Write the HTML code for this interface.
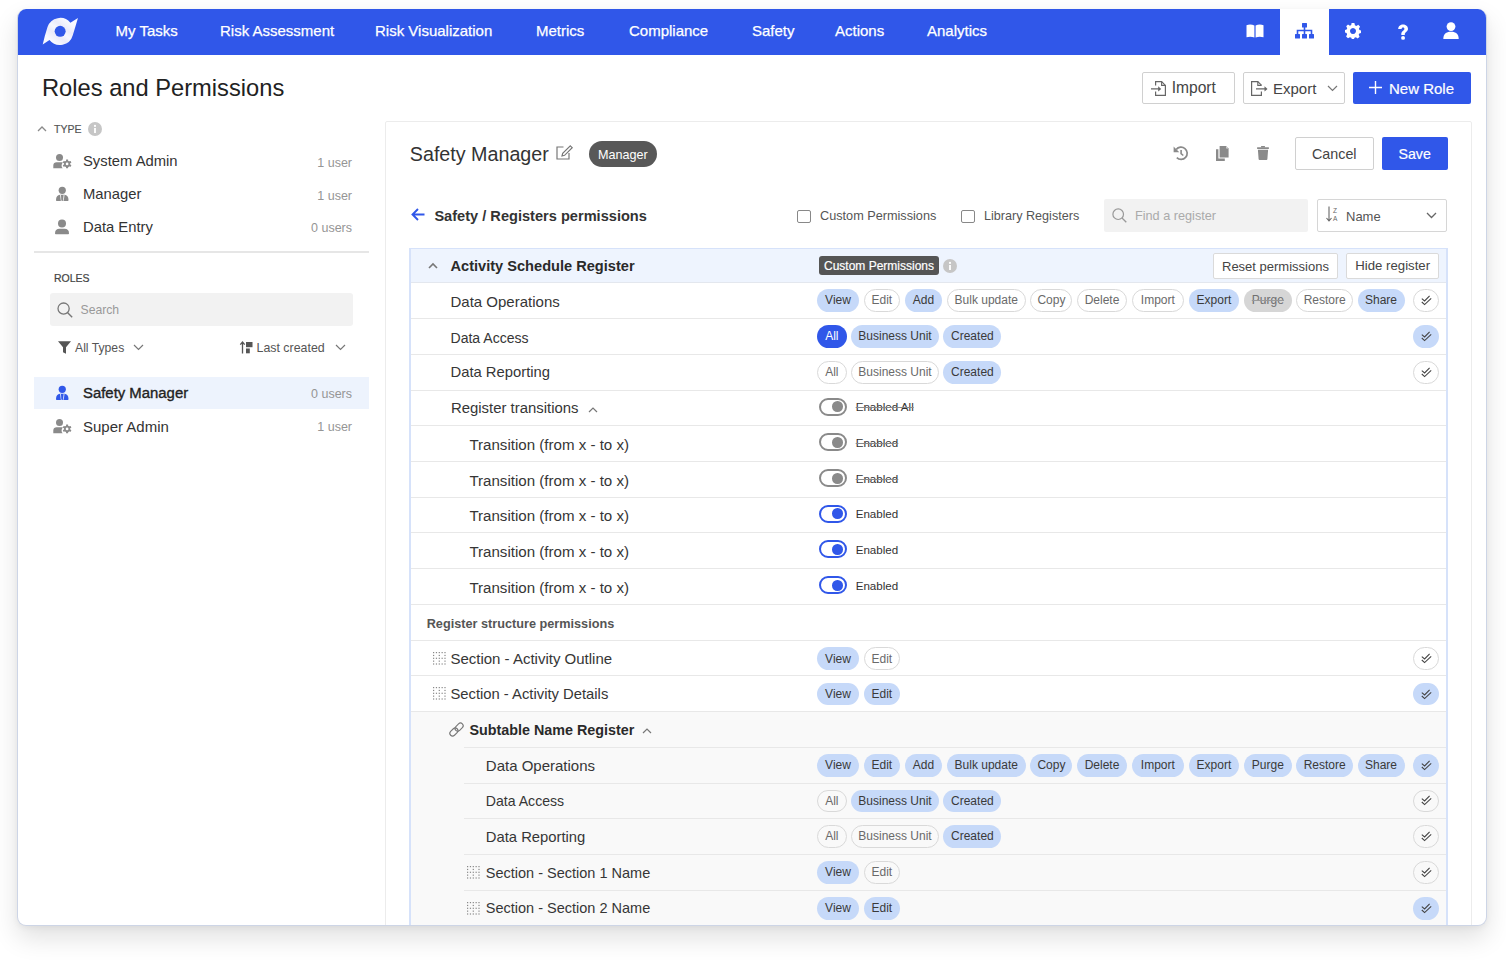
<!DOCTYPE html>
<html><head><meta charset="utf-8">
<style>
*{box-sizing:border-box;margin:0;padding:0}
html,body{width:1506px;height:960px;overflow:hidden;background:#fff;font-family:"Liberation Sans",sans-serif;color:#333}
.abs{position:absolute}
svg.abs{overflow:visible}
#frame{position:absolute;left:17px;top:9px;width:1470px;height:917px;border:1px solid #cdd5e6;border-top:0;border-radius:9px;background:#fff;box-shadow:0 12px 26px rgba(0,0,0,0.12),0 2px 6px rgba(0,0,0,0.05);overflow:hidden}
.txt{position:absolute;white-space:nowrap}
.pill{position:absolute;font-size:12px;line-height:20px;display:flex;align-items:center;justify-content:center;white-space:nowrap}
</style></head><body>
<div id="frame">
<div class="abs" style="left:0.00px;top:0.00px;width:1468.00px;height:46.00px;background:#3057e9"></div>
<svg class="abs" style="left:22.00px;top:6.00px;" width="40" height="32" viewBox="0 0 40 32"><defs><linearGradient id="lg" x1="0.8" y1="0.2" x2="0.2" y2="0.8"><stop offset="0" stop-color="#f8f9ff"/><stop offset="0.3" stop-color="#ebebfa"/><stop offset="0.5" stop-color="#f6f7fe"/><stop offset="0.7" stop-color="#ebebfa"/><stop offset="1" stop-color="#f8f9ff"/></linearGradient></defs><path d="M2.7,29.5 L9.5,24.9 A13.36,13.36 0 0 0 32.8,20.2 Q35.3,12 37.96,2.94 L30.4,7.7 A13.36,13.36 0 0 0 7.5,12 Q4.6,21 2.7,29.5 Z" fill="url(#lg)"/><circle cx="20.15" cy="16.3" r="5.5" fill="#3057e9"/></svg>
<div class="txt" style="top:11.10px;font-size:15px;line-height:21px;color:#ffffff;-webkit-text-stroke:0.25px #ffffff;left:97.50px;">My Tasks</div>
<div class="txt" style="top:11.10px;font-size:15px;line-height:21px;color:#ffffff;-webkit-text-stroke:0.25px #ffffff;left:202.00px;">Risk Assessment</div>
<div class="txt" style="top:11.10px;font-size:15px;line-height:21px;color:#ffffff;-webkit-text-stroke:0.25px #ffffff;left:357.00px;">Risk Visualization</div>
<div class="txt" style="top:11.10px;font-size:15px;line-height:21px;color:#ffffff;-webkit-text-stroke:0.25px #ffffff;left:518.00px;">Metrics</div>
<div class="txt" style="top:11.10px;font-size:15px;line-height:21px;color:#ffffff;-webkit-text-stroke:0.25px #ffffff;left:611.00px;">Compliance</div>
<div class="txt" style="top:11.10px;font-size:15px;line-height:21px;color:#ffffff;-webkit-text-stroke:0.25px #ffffff;left:734.00px;">Safety</div>
<div class="txt" style="top:11.10px;font-size:15px;line-height:21px;color:#ffffff;-webkit-text-stroke:0.25px #ffffff;left:817.00px;">Actions</div>
<div class="txt" style="top:11.10px;font-size:15px;line-height:21px;color:#ffffff;-webkit-text-stroke:0.25px #ffffff;left:909.00px;">Analytics</div>
<div class="abs" style="left:1262.00px;top:0.00px;width:49.00px;height:46.00px;background:#fff"></div>
<svg class="abs" style="left:1228.00px;top:15.00px;" width="18" height="14" viewBox="0 0 18 14"><path d="M0.5,1.2 C3,0.3 6,0.3 8.4,1.6 V13.6 C6,12.4 3,12.4 0.5,13.2 Z M9.6,1.6 C12,0.3 15,0.3 17.5,1.2 V13.2 C15,12.4 12,12.4 9.6,13.6 Z" fill="#fff"/></svg>
<svg class="abs" style="left:1277.00px;top:14.00px;" width="19" height="16" viewBox="0 0 19 16"><rect x="7" y="0" width="5" height="4.5" rx="0.6" fill="#3057e9"/><rect x="0" y="11" width="5" height="4.5" rx="0.6" fill="#3057e9"/><rect x="7" y="11" width="5" height="4.5" rx="0.6" fill="#3057e9"/><rect x="14" y="11" width="5" height="4.5" rx="0.6" fill="#3057e9"/><path d="M9.5,4 V11 M2.5,11 V7.5 H16.5 V11" fill="none" stroke="#3057e9" stroke-width="1.6"/></svg>
<svg class="abs" style="left:1327.00px;top:14.00px;" width="16" height="16" viewBox="0 0 16 16"><path fill="#fff" fill-rule="evenodd" d="M6.6,0 H9.4 L9.9,2.2 L11.3,2.9 L13.3,1.8 L15.1,3.7 L13.9,5.6 L14.4,7 L16,7.5 V9.9 L14.3,10.4 L13.7,11.8 L14.6,13.7 L12.7,15.4 L10.9,14.3 L9.5,14.8 L9,16 H6.8 L6.3,14.8 L4.9,14.2 L3,15.2 L1.1,13.4 L2.1,11.5 L1.6,10.1 L0,9.6 V7.1 L1.6,6.6 L2.2,5.2 L1.2,3.3 L3,1.6 L4.9,2.7 L6.2,2.1 Z M8,5 A3,3 0 1 0 8.001,5 Z"/></svg>
<svg class="abs" style="left:1379.00px;top:14.50px;" width="12" height="16" viewBox="0 0 12 16"><path d="M1.2,5 C1.2,2.1 3.5,0.4 6,0.4 C8.7,0.4 11,2.2 11,4.8 C11,7.8 7.8,8.1 7.8,10.3 V11 H4.3 V10.1 C4.3,6.8 7.4,6.5 7.4,4.9 C7.4,4 6.8,3.5 6,3.5 C5.1,3.5 4.6,4.1 4.6,5 Z" fill="#fff"/><circle cx="6.05" cy="13.9" r="1.95" fill="#fff"/></svg>
<svg class="abs" style="left:1425.00px;top:13.00px;" width="16" height="17" viewBox="0 0 16 17"><circle cx="8" cy="4.6" r="4.4" fill="#fff"/><path d="M0.3,17 C0.3,12 3,9.8 8,9.8 C13,9.8 15.7,12 15.7,17 Z" fill="#fff"/></svg>
<div class="txt" style="top:63.49px;font-size:23.7px;line-height:33px;color:#222;left:24.00px;">Roles and Permissions</div>
<div class="abs" style="left:1124.00px;top:63.00px;width:93.00px;height:32.00px;border:1px solid #d0d0d0;border-radius:2px;background:#fff"></div>
<svg class="abs" style="left:1133.00px;top:72.00px;" width="16" height="15" viewBox="0 0 16 15"><path d="M4.6,4.4 V0.6 H10.6 L14.4,4.4 V14.4 H4.6 V10.6" fill="none" stroke="#666" stroke-width="1.2"/><path d="M10.6,0.6 V4.4 H14.4" fill="none" stroke="#666" stroke-width="1.1"/><path d="M0,7.9 H8" stroke="#666" stroke-width="1.3"/><path d="M7.2,5.3 L10.2,7.9 L7.2,10.5 Z" fill="#666"/></svg>
<div class="txt" style="top:68.39px;font-size:15.6px;line-height:22px;color:#444;left:1153.70px;">Import</div>
<div class="abs" style="left:1225.00px;top:63.00px;width:102.00px;height:32.00px;border:1px solid #d0d0d0;border-radius:2px;background:#fff"></div>
<svg class="abs" style="left:1233.00px;top:72.00px;" width="18" height="15" viewBox="0 0 18 15"><path d="M10.4,4.4 V4.2 L6.8,0.6 H0.6 V14.4 H10.4 V10.6" fill="none" stroke="#666" stroke-width="1.2"/><path d="M6.8,0.6 V4.4 H10.4" fill="none" stroke="#666" stroke-width="1.1"/><path d="M5,7.9 H14" stroke="#666" stroke-width="1.3"/><path d="M13.5,5.3 L16.5,7.9 L13.5,10.5 Z" fill="#666"/></svg>
<div class="txt" style="top:69.10px;font-size:15px;line-height:21px;color:#444;left:1255.00px;">Export</div>
<svg class="abs" style="left:1309.00px;top:76.00px;" width="11" height="7" viewBox="0 0 11 7"><path d="M1,1 L5.5,5.5 L10,1" fill="none" stroke="#777" stroke-width="1.2"/></svg>
<div class="abs" style="left:1335.00px;top:63.00px;width:118.00px;height:32.00px;background:#3057e9;border-radius:2px"></div>
<svg class="abs" style="left:1351.00px;top:72.00px;" width="13" height="13" viewBox="0 0 13 13"><path d="M6.5,0 V13 M0,6.5 H13" stroke="#fff" stroke-width="1.4"/></svg>
<div class="txt" style="top:69.30px;font-size:15px;line-height:21px;color:#fff;-webkit-text-stroke:0.2px #fff;left:1371.00px;">New Role</div>
<svg class="abs" style="left:19.00px;top:116.00px;" width="10" height="7" viewBox="0 0 10 7"><path d="M1,6 L5,2 L9,6" fill="none" stroke="#8a8a8a" stroke-width="1.3"/></svg>
<div class="txt" style="top:112.66px;font-size:10.5px;line-height:15px;color:#555;-webkit-text-stroke:0.2px #555;left:36.00px;">TYPE</div>
<svg class="abs" style="left:70.00px;top:112.50px;" width="14" height="14" viewBox="0 0 14 14"><circle cx="7" cy="7" r="7" fill="#c6c6c6"/><rect x="6.1" y="6" width="1.8" height="5" fill="#fff"/><circle cx="7" cy="3.9" r="1.1" fill="#fff"/></svg>
<svg class="abs" style="left:35.00px;top:145.00px;" width="19" height="16" viewBox="0 0 19 16"><circle cx="6.5" cy="3.6" r="3.5" fill="#8a8a8a"/><path d="M0.3,14.2 V11.4 C0.3,9.5 1.8,8.3 3.6,8.3 H9.4 L9.9,8.6 C9,9.6 8.6,10.8 8.6,11.9 C8.6,12.9 9,13.6 9.7,14.2 Z" fill="#8a8a8a"/><circle cx="14.1" cy="9.9" r="3.1" fill="#8a8a8a"/><rect x="13.05" y="5.5" width="2.1" height="2.2" rx="0.3" transform="rotate(0 14.1 9.9)" fill="#8a8a8a"/><rect x="13.05" y="5.5" width="2.1" height="2.2" rx="0.3" transform="rotate(60 14.1 9.9)" fill="#8a8a8a"/><rect x="13.05" y="5.5" width="2.1" height="2.2" rx="0.3" transform="rotate(120 14.1 9.9)" fill="#8a8a8a"/><rect x="13.05" y="5.5" width="2.1" height="2.2" rx="0.3" transform="rotate(180 14.1 9.9)" fill="#8a8a8a"/><rect x="13.05" y="5.5" width="2.1" height="2.2" rx="0.3" transform="rotate(240 14.1 9.9)" fill="#8a8a8a"/><rect x="13.05" y="5.5" width="2.1" height="2.2" rx="0.3" transform="rotate(300 14.1 9.9)" fill="#8a8a8a"/><circle cx="14.1" cy="9.9" r="1.35" fill="#fff"/></svg>
<div class="txt" style="top:142.37px;font-size:14.8px;line-height:21px;color:#333;left:65.00px;">System Admin</div>
<div class="txt" style="top:144.67px;font-size:12.5px;line-height:18px;color:#959595;right:1134.00px;">1 user</div>
<svg class="abs" style="left:37.90px;top:177.00px;" width="14" height="16" viewBox="0 0 14 16"><circle cx="6.25" cy="4.3" r="3.6" fill="#8a8a8a"/><path d="M0,13.9 C0,10.6 1.5,8.9 4,8.7 H8.5 C11,8.9 12.5,10.6 12.5,13.9 C12.5,14.6 12.1,14.9 11.5,14.9 H1 C0.4,14.9 0,14.6 0,13.9 Z" fill="#8a8a8a"/><path d="M4.4,8.9 L5.3,14.9 M8.1,8.9 L7.2,14.9" stroke="#fff" stroke-width="0.8"/><path d="M5.7,8.9 H6.8 L7,13.5 L6.25,14.5 L5.5,13.5 Z" fill="#8a8a8a"/></svg>
<div class="txt" style="top:175.27px;font-size:14.8px;line-height:21px;color:#333;left:65.00px;">Manager</div>
<div class="txt" style="top:177.57px;font-size:12.5px;line-height:18px;color:#959595;right:1134.00px;">1 user</div>
<svg class="abs" style="left:37.10px;top:209.80px;" width="14" height="16" viewBox="0 0 14 16"><circle cx="7" cy="4.6" r="4" fill="#8a8a8a"/><path d="M0,14.2 C0,11.5 1.5,9.8 4.5,9.8 H9.5 C12.5,9.8 14,11.5 14,14.2 C14,14.9 13.5,15.2 12.8,15.2 H1.2 C0.5,15.2 0,14.9 0,14.2 Z" fill="#8a8a8a"/></svg>
<div class="txt" style="top:207.77px;font-size:14.8px;line-height:21px;color:#333;left:65.00px;">Data Entry</div>
<div class="txt" style="top:210.07px;font-size:12.5px;line-height:18px;color:#959595;right:1134.00px;">0 users</div>
<div class="abs" style="left:16.00px;top:242.00px;width:335.00px;height:2.00px;background:#e6e6e6"></div>
<div class="txt" style="top:261.56px;font-size:10.5px;line-height:15px;color:#444;-webkit-text-stroke:0.2px #444;left:36.00px;">ROLES</div>
<div class="abs" style="left:32.00px;top:284.00px;width:303.00px;height:33.00px;background:#f2f2f2;border-radius:3px"></div>
<svg class="abs" style="left:39.00px;top:293.00px;" width="16" height="16" viewBox="0 0 16 16"><circle cx="6.6" cy="6.6" r="5.6" fill="none" stroke="#777" stroke-width="1.3"/><path d="M10.7,10.7 L15.2,15.2" stroke="#777" stroke-width="1.4"/></svg>
<div class="txt" style="top:292.67px;font-size:12.2px;line-height:17px;color:#999;left:62.50px;">Search</div>
<svg class="abs" style="left:40.00px;top:332.00px;" width="13" height="13" viewBox="0 0 13 13"><path d="M0,0.3 H13 L8,6.3 V12.8 L5,11.3 V6.3 Z" fill="#555"/></svg>
<div class="txt" style="top:330.67px;font-size:12.2px;line-height:17px;color:#555;left:57.00px;">All Types</div>
<svg class="abs" style="left:115.00px;top:335.00px;" width="11" height="7" viewBox="0 0 11 7"><path d="M1,1 L5.5,5.5 L10,1" fill="none" stroke="#777" stroke-width="1.2"/></svg>
<svg class="abs" style="left:222.00px;top:332.00px;" width="13" height="13" viewBox="0 0 13 13"><path d="M2.5,12.5 V1.5 M0.3,3.7 L2.5,1 L4.7,3.7" fill="none" stroke="#555" stroke-width="1.3"/><rect x="6" y="1" width="6.5" height="5.2" fill="#555"/><rect x="6" y="7.5" width="3.8" height="4.8" fill="#555"/></svg>
<div class="txt" style="top:330.60px;font-size:12.4px;line-height:17px;color:#555;left:238.50px;">Last created</div>
<svg class="abs" style="left:317.00px;top:335.00px;" width="11" height="7" viewBox="0 0 11 7"><path d="M1,1 L5.5,5.5 L10,1" fill="none" stroke="#777" stroke-width="1.2"/></svg>
<div class="abs" style="left:16.00px;top:368.00px;width:335.00px;height:32.00px;background:#edf3fd"></div>
<svg class="abs" style="left:37.90px;top:375.80px;" width="14" height="16" viewBox="0 0 14 16"><circle cx="6.25" cy="4.3" r="3.6" fill="#3057e9"/><path d="M0,13.9 C0,10.6 1.5,8.9 4,8.7 H8.5 C11,8.9 12.5,10.6 12.5,13.9 C12.5,14.6 12.1,14.9 11.5,14.9 H1 C0.4,14.9 0,14.6 0,13.9 Z" fill="#3057e9"/><path d="M4.4,8.9 L5.3,14.9 M8.1,8.9 L7.2,14.9" stroke="#edf3fd" stroke-width="0.8"/><path d="M5.7,8.9 H6.8 L7,13.5 L6.25,14.5 L5.5,13.5 Z" fill="#3057e9"/></svg>
<div class="txt" style="top:373.94px;font-size:14.9px;line-height:21px;color:#222;-webkit-text-stroke:0.35px #222;left:65.00px;">Safety Manager</div>
<div class="txt" style="top:376.27px;font-size:12.5px;line-height:18px;color:#959595;right:1134.00px;">0 users</div>
<svg class="abs" style="left:35.00px;top:409.60px;" width="19" height="16" viewBox="0 0 19 16"><circle cx="6.5" cy="3.6" r="3.5" fill="#8a8a8a"/><path d="M0.3,14.2 V11.4 C0.3,9.5 1.8,8.3 3.6,8.3 H9.4 L9.9,8.6 C9,9.6 8.6,10.8 8.6,11.9 C8.6,12.9 9,13.6 9.7,14.2 Z" fill="#8a8a8a"/><circle cx="14.1" cy="9.9" r="3.1" fill="#8a8a8a"/><rect x="13.05" y="5.5" width="2.1" height="2.2" rx="0.3" transform="rotate(0 14.1 9.9)" fill="#8a8a8a"/><rect x="13.05" y="5.5" width="2.1" height="2.2" rx="0.3" transform="rotate(60 14.1 9.9)" fill="#8a8a8a"/><rect x="13.05" y="5.5" width="2.1" height="2.2" rx="0.3" transform="rotate(120 14.1 9.9)" fill="#8a8a8a"/><rect x="13.05" y="5.5" width="2.1" height="2.2" rx="0.3" transform="rotate(180 14.1 9.9)" fill="#8a8a8a"/><rect x="13.05" y="5.5" width="2.1" height="2.2" rx="0.3" transform="rotate(240 14.1 9.9)" fill="#8a8a8a"/><rect x="13.05" y="5.5" width="2.1" height="2.2" rx="0.3" transform="rotate(300 14.1 9.9)" fill="#8a8a8a"/><circle cx="14.1" cy="9.9" r="1.35" fill="#fff"/></svg>
<div class="txt" style="top:406.50px;font-size:15px;line-height:21px;color:#333;left:65.00px;">Super Admin</div>
<div class="txt" style="top:408.87px;font-size:12.5px;line-height:18px;color:#959595;right:1134.00px;">1 user</div>
<div class="abs" style="left:367px;top:112px;width:1087px;height:830px;border:1px solid #ececec;border-radius:2px"></div>
<div class="txt" style="top:131.17px;font-size:19.7px;line-height:28px;color:#333;left:391.80px;">Safety Manager</div>
<svg class="abs" style="left:538.00px;top:136.00px;" width="17" height="15" viewBox="0 0 17 15"><path d="M7.5,2 H1 V14 H13 V8" fill="none" stroke="#777" stroke-width="1.2"/><path d="M14.3,0.8 L16.2,2.7 L8.6,10.3 L6,11 L6.7,8.4 Z" fill="none" stroke="#777" stroke-width="1.2"/></svg>
<div class="abs" style="left:571.00px;top:132.00px;width:68.00px;height:26.00px;background:#585858;border-radius:13px"></div>
<div class="txt" style="top:137.23px;font-size:12.6px;line-height:18px;color:#fff;left:580.00px;">Manager</div>
<svg class="abs" style="left:1155.00px;top:136.00px;" width="16" height="16" viewBox="0 0 16 16"><path d="M3.8,12.6 A6.1,6.1 0 1 0 3.2,4.6" fill="none" stroke="#8a8a8a" stroke-width="1.7"/><path d="M0.6,1.6 V7.3 H6.3 Z" fill="#8a8a8a"/><path d="M8.1,4.9 V8.7 L10.3,10.5" fill="none" stroke="#8a8a8a" stroke-width="1.6"/></svg>
<svg class="abs" style="left:1198.00px;top:137.00px;" width="13" height="15" viewBox="0 0 13 15"><path d="M1.2,3.2 V13.8 H8.8" fill="none" stroke="#8a8a8a" stroke-width="2.4"/><path d="M3.6,0 H10.2 L12.6,2.4 V11.6 H3.6 Z" fill="#8a8a8a"/><path d="M10.2,0 V2.4 H12.6 Z" fill="#ddd"/></svg>
<svg class="abs" style="left:1239.00px;top:137.00px;" width="12" height="14" viewBox="0 0 12 14"><rect x="0" y="1.2" width="12" height="1.7" rx="0.6" fill="#8a8a8a"/><rect x="4" y="0" width="4" height="1.6" rx="0.5" fill="#8a8a8a"/><path d="M0.9,3.8 H11.1 L10.4,13 A1,1 0 0 1 9.4,14 H2.6 A1,1 0 0 1 1.6,13 Z" fill="#8a8a8a"/></svg>
<div class="abs" style="left:1277.00px;top:128.00px;width:79.00px;height:33.00px;border:1px solid #d0d0d0;border-radius:2px;background:#fff"></div>
<div class="txt" style="top:135.35px;font-size:14.3px;line-height:20px;color:#444;left:1294.00px;">Cancel</div>
<div class="abs" style="left:1364.00px;top:128.00px;width:65.50px;height:33.00px;background:#3057e9;border-radius:2px"></div>
<div class="txt" style="top:135.38px;font-size:14.2px;line-height:20px;color:#fff;-webkit-text-stroke:0.2px #fff;left:1380.50px;">Save</div>
<svg class="abs" style="left:393.00px;top:199.00px;" width="14" height="13" viewBox="0 0 14 13"><path d="M13.5,6.5 H2 M7,1 L1.5,6.5 L7,12" fill="none" stroke="#3057e9" stroke-width="1.9"/></svg>
<div class="txt" style="top:196.64px;font-size:14.6px;line-height:20px;color:#333;font-weight:bold;left:416.40px;">Safety / Registers permissions</div>
<div class="abs" style="left:779.00px;top:200.70px;width:14.00px;height:13.80px;border:1.3px solid #888;border-radius:2px"></div>
<div class="txt" style="top:198.30px;font-size:12.7px;line-height:18px;color:#555;left:802.00px;">Custom Permissions</div>
<div class="abs" style="left:943.00px;top:200.70px;width:14.40px;height:13.80px;border:1.3px solid #888;border-radius:2px"></div>
<div class="txt" style="top:198.33px;font-size:12.6px;line-height:18px;color:#555;left:966.00px;">Library Registers</div>
<div class="abs" style="left:1086.00px;top:190.00px;width:204.00px;height:33.00px;background:#f2f2f2;border-radius:2px"></div>
<svg class="abs" style="left:1094.00px;top:199.00px;" width="15" height="15" viewBox="0 0 15 15"><circle cx="6.2" cy="6.2" r="5.3" fill="none" stroke="#999" stroke-width="1.2"/><path d="M10,10 L14.3,14.3" stroke="#999" stroke-width="1.3"/></svg>
<div class="txt" style="top:197.60px;font-size:12.7px;line-height:18px;color:#aaa;left:1117.00px;">Find a register</div>
<div class="abs" style="left:1299.00px;top:190.00px;width:130.00px;height:33.00px;border:1px solid #d6d6d6;border-radius:2px;background:#fff"></div>
<svg class="abs" style="left:1308.00px;top:197.00px;" width="13" height="16" viewBox="0 0 13 16"><path d="M3,0.5 V14.5 M0.5,12 L3,15 L5.5,12" fill="none" stroke="#666" stroke-width="1.1"/><text x="7" y="6.5" font-size="6.5" font-family="Liberation Sans" fill="#666">Z</text><text x="7" y="15" font-size="6.5" font-family="Liberation Sans" fill="#666">A</text></svg>
<div class="txt" style="top:199.00px;font-size:13px;line-height:18px;color:#555;left:1328.00px;">Name</div>
<svg class="abs" style="left:1408.00px;top:203.00px;" width="11" height="7" viewBox="0 0 11 7"><path d="M1,1 L5.5,5.5 L10,1" fill="none" stroke="#666" stroke-width="1.3"/></svg>
<div class="abs" style="left:392.00px;top:239.00px;width:1037.00px;height:35.00px;background:#eef4fe;border-top:1px solid #d6e2fa;border-bottom:1px solid #e3e7ee"></div>
<div class="abs" style="left:392.00px;top:703.00px;width:1037.00px;height:248.00px;background:#f9f9f9"></div>
<div class="abs" style="left:392.00px;top:309.00px;width:1037.00px;height:1.00px;background:#e8e8e8"></div>
<div class="abs" style="left:392.00px;top:345.00px;width:1037.00px;height:1.00px;background:#e8e8e8"></div>
<div class="abs" style="left:392.00px;top:381.00px;width:1037.00px;height:1.00px;background:#e8e8e8"></div>
<div class="abs" style="left:392.00px;top:416.00px;width:1037.00px;height:1.00px;background:#e8e8e8"></div>
<div class="abs" style="left:392.00px;top:452.00px;width:1037.00px;height:1.00px;background:#e8e8e8"></div>
<div class="abs" style="left:392.00px;top:488.00px;width:1037.00px;height:1.00px;background:#e8e8e8"></div>
<div class="abs" style="left:392.00px;top:523.00px;width:1037.00px;height:1.00px;background:#e8e8e8"></div>
<div class="abs" style="left:392.00px;top:559.00px;width:1037.00px;height:1.00px;background:#e8e8e8"></div>
<div class="abs" style="left:392.00px;top:595.00px;width:1037.00px;height:1.00px;background:#e8e8e8"></div>
<div class="abs" style="left:392.00px;top:631.00px;width:1037.00px;height:1.00px;background:#e8e8e8"></div>
<div class="abs" style="left:392.00px;top:666.00px;width:1037.00px;height:1.00px;background:#e8e8e8"></div>
<div class="abs" style="left:392.00px;top:702.00px;width:1037.00px;height:1.00px;background:#e8e8e8"></div>
<div class="abs" style="left:446.00px;top:738.00px;width:983.00px;height:1.00px;background:#e8e8e8"></div>
<div class="abs" style="left:446.00px;top:774.00px;width:983.00px;height:1.00px;background:#e8e8e8"></div>
<div class="abs" style="left:446.00px;top:809.00px;width:983.00px;height:1.00px;background:#e8e8e8"></div>
<div class="abs" style="left:446.00px;top:845.00px;width:983.00px;height:1.00px;background:#e8e8e8"></div>
<div class="abs" style="left:446.00px;top:881.00px;width:983.00px;height:1.00px;background:#e8e8e8"></div>
<div class="abs" style="left:391.00px;top:239.00px;width:2.00px;height:712.00px;background:#d6e2fa"></div>
<div class="abs" style="left:1428.00px;top:239.00px;width:2.00px;height:712.00px;background:#d6e2fa"></div>
<svg class="abs" style="left:410.00px;top:253.00px;" width="10" height="7" viewBox="0 0 10 7"><path d="M1,6 L5,2 L9,6" fill="none" stroke="#777" stroke-width="1.6"/></svg>
<div class="txt" style="top:246.84px;font-size:14.6px;line-height:20px;color:#2a2a2a;font-weight:bold;left:432.50px;">Activity Schedule Register</div>
<div class="abs" style="left:801.00px;top:247.40px;width:119.50px;height:18.20px;background:#555;border-radius:3px"></div>
<div class="txt" style="top:248.64px;font-size:12px;line-height:17px;color:#fff;-webkit-text-stroke:0.2px #fff;left:806.00px;">Custom Permissions</div>
<svg class="abs" style="left:925.00px;top:249.80px;" width="14" height="14" viewBox="0 0 14 14"><circle cx="7" cy="7" r="7" fill="#c6c6c6"/><rect x="6.1" y="6" width="1.8" height="5" fill="#fff"/><circle cx="7" cy="3.9" r="1.1" fill="#fff"/></svg>
<div class="abs" style="left:1195.00px;top:244.00px;width:125.00px;height:26.00px;border:1px solid #dadada;border-radius:2px;background:#fff"></div>
<div class="txt" style="top:248.50px;font-size:13px;line-height:18px;color:#444;left:1204.00px;">Reset permissions</div>
<div class="abs" style="left:1328.00px;top:244.00px;width:93.00px;height:26.00px;border:1px solid #dadada;border-radius:2px;background:#fff"></div>
<div class="txt" style="top:248.43px;font-size:13.2px;line-height:18px;color:#444;left:1337.30px;">Hide register</div>
<div class="txt" style="top:282.40px;font-size:15px;line-height:21px;color:#363636;left:432.50px;">Data Operations</div>
<div class="pill" style="left:799.00px;top:280.05px;width:42px;height:22.5px;background:#c6d9f9;border-radius:12px;color:#3a3a3a">View</div>
<div class="pill" style="left:845.60px;top:280.05px;width:36.5px;height:22.5px;border:1px solid #d9d9d9;border-radius:12px;color:#6a6a6a">Edit</div>
<div class="pill" style="left:886.70px;top:280.05px;width:37.5px;height:22.5px;background:#c6d9f9;border-radius:12px;color:#3a3a3a">Add</div>
<div class="pill" style="left:928.80px;top:280.05px;width:79px;height:22.5px;border:1px solid #d9d9d9;border-radius:12px;color:#6a6a6a">Bulk update</div>
<div class="pill" style="left:1012.40px;top:280.05px;width:42px;height:22.5px;border:1px solid #d9d9d9;border-radius:12px;color:#6a6a6a">Copy</div>
<div class="pill" style="left:1059.00px;top:280.05px;width:50px;height:22.5px;border:1px solid #d9d9d9;border-radius:12px;color:#6a6a6a">Delete</div>
<div class="pill" style="left:1113.60px;top:280.05px;width:52.5px;height:22.5px;border:1px solid #d9d9d9;border-radius:12px;color:#6a6a6a">Import</div>
<div class="pill" style="left:1170.70px;top:280.05px;width:50.5px;height:22.5px;background:#c6d9f9;border-radius:12px;color:#3a3a3a">Export</div>
<div class="pill" style="left:1225.80px;top:280.05px;width:48px;height:22.5px;background:#d6d6d6;border-radius:12px;color:#707070;text-decoration:line-through;text-decoration-color:#999">Purge</div>
<div class="pill" style="left:1278.40px;top:280.05px;width:56.5px;height:22.5px;border:1px solid #d9d9d9;border-radius:12px;color:#6a6a6a">Restore</div>
<div class="pill" style="left:1339.50px;top:280.05px;width:47px;height:22.5px;background:#c6d9f9;border-radius:12px;color:#3a3a3a">Share</div>
<div class="abs" style="left:1395px;top:280.05px;width:26px;height:22.5px;border-radius:12px;border:1px solid #d9d9d9"></div>
<svg class="abs" style="left:1402.50px;top:285.80px;" width="11" height="11" viewBox="0 0 11 11"><path d="M0.8,3.6 L3.6,6 L8.6,0.8 M0.8,7 L3.6,9.6 L10.2,3.4" fill="none" stroke="#444" stroke-width="1.1"/></svg>
<div class="txt" style="top:318.53px;font-size:14.05px;line-height:20px;color:#363636;left:432.50px;">Data Access</div>
<div class="pill" style="left:799.00px;top:316.05px;width:29.6px;height:22.5px;background:#3057e9;border-radius:12px;color:#fff">All</div>
<div class="pill" style="left:833.20px;top:316.05px;width:87.6px;height:22.5px;background:#c6d9f9;border-radius:12px;color:#3a3a3a">Business Unit</div>
<div class="pill" style="left:925.40px;top:316.05px;width:58px;height:22.5px;background:#c6d9f9;border-radius:12px;color:#3a3a3a">Created</div>
<div class="abs" style="left:1395px;top:316.05px;width:26px;height:22.5px;border-radius:12px;background:#c6d9f9"></div>
<svg class="abs" style="left:1402.50px;top:321.80px;" width="11" height="11" viewBox="0 0 11 11"><path d="M0.8,3.6 L3.6,6 L8.6,0.8 M0.8,7 L3.6,9.6 L10.2,3.4" fill="none" stroke="#444" stroke-width="1.1"/></svg>
<div class="txt" style="top:353.47px;font-size:14.8px;line-height:21px;color:#363636;left:432.50px;">Data Reporting</div>
<div class="pill" style="left:799.00px;top:352.05px;width:29.6px;height:22.5px;border:1px solid #d9d9d9;border-radius:12px;color:#6a6a6a">All</div>
<div class="pill" style="left:833.20px;top:352.05px;width:87.6px;height:22.5px;border:1px solid #d9d9d9;border-radius:12px;color:#6a6a6a">Business Unit</div>
<div class="pill" style="left:925.40px;top:352.05px;width:58px;height:22.5px;background:#c6d9f9;border-radius:12px;color:#3a3a3a">Created</div>
<div class="abs" style="left:1395px;top:352.05px;width:26px;height:22.5px;border-radius:12px;border:1px solid #d9d9d9"></div>
<svg class="abs" style="left:1402.50px;top:357.80px;" width="11" height="11" viewBox="0 0 11 11"><path d="M0.8,3.6 L3.6,6 L8.6,0.8 M0.8,7 L3.6,9.6 L10.2,3.4" fill="none" stroke="#444" stroke-width="1.1"/></svg>
<div class="txt" style="top:389.04px;font-size:14.9px;line-height:21px;color:#363636;left:433.00px;">Register transitions</div>
<svg class="abs" style="left:570.00px;top:396.50px;" width="10" height="7" viewBox="0 0 10 7"><path d="M1,6 L5,2 L9,6" fill="none" stroke="#777" stroke-width="1.2"/></svg>
<div class="abs" style="left:801.30px;top:388.50px;width:27.6px;height:18.4px;border:2px solid #8a8a8a;border-radius:10px;background:#fff"></div>
<div class="abs" style="left:814.20px;top:392.35px;width:10.7px;height:10.7px;border-radius:50%;background:#8a8a8a"></div>
<div class="txt" style="top:390.18px;font-size:11.6px;line-height:16px;color:#333;left:837.70px;text-decoration:line-through;text-decoration-color:#8a8a8a;">Enabled All</div>
<div class="txt" style="top:424.67px;font-size:15.1px;line-height:21px;color:#363636;left:451.40px;">Transition (from x - to x)</div>
<div class="abs" style="left:801.30px;top:424.00px;width:27.6px;height:18.4px;border:2px solid #8a8a8a;border-radius:10px;background:#fff"></div>
<div class="abs" style="left:814.20px;top:427.85px;width:10.7px;height:10.7px;border-radius:50%;background:#8a8a8a"></div>
<div class="txt" style="top:425.68px;font-size:11.6px;line-height:16px;color:#333;left:837.70px;text-decoration:line-through;text-decoration-color:#8a8a8a;">Enabled</div>
<div class="txt" style="top:460.67px;font-size:15.1px;line-height:21px;color:#363636;left:451.40px;">Transition (from x - to x)</div>
<div class="abs" style="left:801.30px;top:460.00px;width:27.6px;height:18.4px;border:2px solid #8a8a8a;border-radius:10px;background:#fff"></div>
<div class="abs" style="left:814.20px;top:463.85px;width:10.7px;height:10.7px;border-radius:50%;background:#8a8a8a"></div>
<div class="txt" style="top:461.68px;font-size:11.6px;line-height:16px;color:#333;left:837.70px;text-decoration:line-through;text-decoration-color:#8a8a8a;">Enabled</div>
<div class="txt" style="top:496.37px;font-size:15.1px;line-height:21px;color:#363636;left:451.40px;">Transition (from x - to x)</div>
<div class="abs" style="left:801.30px;top:495.50px;width:27.6px;height:18.4px;border:2px solid #3057e9;border-radius:10px;background:#fff"></div>
<div class="abs" style="left:814.20px;top:499.35px;width:10.7px;height:10.7px;border-radius:50%;background:#3057e9"></div>
<div class="txt" style="top:497.18px;font-size:11.6px;line-height:16px;color:#333;left:837.70px;">Enabled</div>
<div class="txt" style="top:532.37px;font-size:15.1px;line-height:21px;color:#363636;left:451.40px;">Transition (from x - to x)</div>
<div class="abs" style="left:801.30px;top:531.00px;width:27.6px;height:18.4px;border:2px solid #3057e9;border-radius:10px;background:#fff"></div>
<div class="abs" style="left:814.20px;top:534.85px;width:10.7px;height:10.7px;border-radius:50%;background:#3057e9"></div>
<div class="txt" style="top:532.68px;font-size:11.6px;line-height:16px;color:#333;left:837.70px;">Enabled</div>
<div class="txt" style="top:567.97px;font-size:15.1px;line-height:21px;color:#363636;left:451.40px;">Transition (from x - to x)</div>
<div class="abs" style="left:801.30px;top:567.00px;width:27.6px;height:18.4px;border:2px solid #3057e9;border-radius:10px;background:#fff"></div>
<div class="abs" style="left:814.20px;top:570.85px;width:10.7px;height:10.7px;border-radius:50%;background:#3057e9"></div>
<div class="txt" style="top:568.68px;font-size:11.6px;line-height:16px;color:#333;left:837.70px;">Enabled</div>
<div class="txt" style="top:605.50px;font-size:12.7px;line-height:18px;color:#555;font-weight:bold;left:408.70px;">Register structure permissions</div>
<svg class="abs" style="left:414.50px;top:643.00px;" width="12" height="12" viewBox="0 0 12 12"><rect x="0.00" y="0.00" width="1.2" height="1.2" fill="#888"/><rect x="0.00" y="2.85" width="1.2" height="1.2" fill="#888"/><rect x="0.00" y="5.70" width="1.2" height="1.2" fill="#888"/><rect x="0.00" y="8.55" width="1.2" height="1.2" fill="#888"/><rect x="0.00" y="11.40" width="1.2" height="1.2" fill="#888"/><rect x="2.85" y="0.00" width="1.2" height="1.2" fill="#888"/><rect x="2.85" y="5.70" width="1.2" height="1.2" fill="#888"/><rect x="2.85" y="11.40" width="1.2" height="1.2" fill="#888"/><rect x="5.70" y="0.00" width="1.2" height="1.2" fill="#888"/><rect x="5.70" y="2.85" width="1.2" height="1.2" fill="#888"/><rect x="5.70" y="5.70" width="1.2" height="1.2" fill="#888"/><rect x="5.70" y="8.55" width="1.2" height="1.2" fill="#888"/><rect x="5.70" y="11.40" width="1.2" height="1.2" fill="#888"/><rect x="8.55" y="0.00" width="1.2" height="1.2" fill="#888"/><rect x="8.55" y="5.70" width="1.2" height="1.2" fill="#888"/><rect x="8.55" y="11.40" width="1.2" height="1.2" fill="#888"/><rect x="11.40" y="0.00" width="1.2" height="1.2" fill="#888"/><rect x="11.40" y="2.85" width="1.2" height="1.2" fill="#888"/><rect x="11.40" y="5.70" width="1.2" height="1.2" fill="#888"/><rect x="11.40" y="8.55" width="1.2" height="1.2" fill="#888"/><rect x="11.40" y="11.40" width="1.2" height="1.2" fill="#888"/></svg>
<div class="txt" style="top:638.80px;font-size:15px;line-height:21px;color:#363636;left:432.40px;">Section - Activity Outline</div>
<div class="pill" style="left:799.00px;top:638.45px;width:42px;height:22.5px;background:#c6d9f9;border-radius:12px;color:#3a3a3a">View</div>
<div class="pill" style="left:845.60px;top:638.45px;width:36.5px;height:22.5px;border:1px solid #d9d9d9;border-radius:12px;color:#6a6a6a">Edit</div>
<div class="abs" style="left:1395px;top:638.45px;width:26px;height:22.5px;border-radius:12px;border:1px solid #d9d9d9"></div>
<svg class="abs" style="left:1402.50px;top:644.20px;" width="11" height="11" viewBox="0 0 11 11"><path d="M0.8,3.6 L3.6,6 L8.6,0.8 M0.8,7 L3.6,9.6 L10.2,3.4" fill="none" stroke="#444" stroke-width="1.1"/></svg>
<svg class="abs" style="left:414.50px;top:678.00px;" width="12" height="12" viewBox="0 0 12 12"><rect x="0.00" y="0.00" width="1.2" height="1.2" fill="#888"/><rect x="0.00" y="2.85" width="1.2" height="1.2" fill="#888"/><rect x="0.00" y="5.70" width="1.2" height="1.2" fill="#888"/><rect x="0.00" y="8.55" width="1.2" height="1.2" fill="#888"/><rect x="0.00" y="11.40" width="1.2" height="1.2" fill="#888"/><rect x="2.85" y="0.00" width="1.2" height="1.2" fill="#888"/><rect x="2.85" y="5.70" width="1.2" height="1.2" fill="#888"/><rect x="2.85" y="11.40" width="1.2" height="1.2" fill="#888"/><rect x="5.70" y="0.00" width="1.2" height="1.2" fill="#888"/><rect x="5.70" y="2.85" width="1.2" height="1.2" fill="#888"/><rect x="5.70" y="5.70" width="1.2" height="1.2" fill="#888"/><rect x="5.70" y="8.55" width="1.2" height="1.2" fill="#888"/><rect x="5.70" y="11.40" width="1.2" height="1.2" fill="#888"/><rect x="8.55" y="0.00" width="1.2" height="1.2" fill="#888"/><rect x="8.55" y="5.70" width="1.2" height="1.2" fill="#888"/><rect x="8.55" y="11.40" width="1.2" height="1.2" fill="#888"/><rect x="11.40" y="0.00" width="1.2" height="1.2" fill="#888"/><rect x="11.40" y="2.85" width="1.2" height="1.2" fill="#888"/><rect x="11.40" y="5.70" width="1.2" height="1.2" fill="#888"/><rect x="11.40" y="8.55" width="1.2" height="1.2" fill="#888"/><rect x="11.40" y="11.40" width="1.2" height="1.2" fill="#888"/></svg>
<div class="txt" style="top:674.67px;font-size:14.8px;line-height:21px;color:#363636;left:432.40px;">Section - Activity Details</div>
<div class="pill" style="left:799.00px;top:673.95px;width:42px;height:22.5px;background:#c6d9f9;border-radius:12px;color:#3a3a3a">View</div>
<div class="pill" style="left:845.60px;top:673.95px;width:36.5px;height:22.5px;background:#c6d9f9;border-radius:12px;color:#3a3a3a">Edit</div>
<div class="abs" style="left:1395px;top:673.95px;width:26px;height:22.5px;border-radius:12px;background:#c6d9f9"></div>
<svg class="abs" style="left:1402.50px;top:679.70px;" width="11" height="11" viewBox="0 0 11 11"><path d="M0.8,3.6 L3.6,6 L8.6,0.8 M0.8,7 L3.6,9.6 L10.2,3.4" fill="none" stroke="#444" stroke-width="1.1"/></svg>
<svg class="abs" style="left:430.60px;top:712.50px;" width="15" height="15" viewBox="0 0 15 15"><rect x="7.4" y="0.5" width="5.4" height="9.2" rx="2.7" transform="rotate(45 10.1 5.1)" fill="none" stroke="#777" stroke-width="1.1"/><rect x="2.2" y="5.4" width="5.4" height="9.2" rx="2.7" transform="rotate(45 4.9 10)" fill="none" stroke="#777" stroke-width="1.1"/></svg>
<div class="txt" style="top:711.33px;font-size:14.35px;line-height:20px;color:#2a2a2a;font-weight:bold;left:451.40px;">Subtable Name Register</div>
<svg class="abs" style="left:624.00px;top:717.50px;" width="10" height="7" viewBox="0 0 10 7"><path d="M1,6 L5,2 L9,6" fill="none" stroke="#777" stroke-width="1.2"/></svg>
<div class="txt" style="top:746.00px;font-size:15px;line-height:21px;color:#363636;left:467.80px;">Data Operations</div>
<div class="pill" style="left:799.00px;top:745.05px;width:42px;height:22.5px;background:#c6d9f9;border-radius:12px;color:#3a3a3a">View</div>
<div class="pill" style="left:845.60px;top:745.05px;width:36.5px;height:22.5px;background:#c6d9f9;border-radius:12px;color:#3a3a3a">Edit</div>
<div class="pill" style="left:886.70px;top:745.05px;width:37.5px;height:22.5px;background:#c6d9f9;border-radius:12px;color:#3a3a3a">Add</div>
<div class="pill" style="left:928.80px;top:745.05px;width:79px;height:22.5px;background:#c6d9f9;border-radius:12px;color:#3a3a3a">Bulk update</div>
<div class="pill" style="left:1012.40px;top:745.05px;width:42px;height:22.5px;background:#c6d9f9;border-radius:12px;color:#3a3a3a">Copy</div>
<div class="pill" style="left:1059.00px;top:745.05px;width:50px;height:22.5px;background:#c6d9f9;border-radius:12px;color:#3a3a3a">Delete</div>
<div class="pill" style="left:1113.60px;top:745.05px;width:52.5px;height:22.5px;background:#c6d9f9;border-radius:12px;color:#3a3a3a">Import</div>
<div class="pill" style="left:1170.70px;top:745.05px;width:50.5px;height:22.5px;background:#c6d9f9;border-radius:12px;color:#3a3a3a">Export</div>
<div class="pill" style="left:1225.80px;top:745.05px;width:48px;height:22.5px;background:#c6d9f9;border-radius:12px;color:#3a3a3a">Purge</div>
<div class="pill" style="left:1278.40px;top:745.05px;width:56.5px;height:22.5px;background:#c6d9f9;border-radius:12px;color:#3a3a3a">Restore</div>
<div class="pill" style="left:1339.50px;top:745.05px;width:47px;height:22.5px;background:#c6d9f9;border-radius:12px;color:#3a3a3a">Share</div>
<div class="abs" style="left:1395px;top:745.05px;width:26px;height:22.5px;border-radius:12px;background:#c6d9f9"></div>
<svg class="abs" style="left:1402.50px;top:750.80px;" width="11" height="11" viewBox="0 0 11 11"><path d="M0.8,3.6 L3.6,6 L8.6,0.8 M0.8,7 L3.6,9.6 L10.2,3.4" fill="none" stroke="#444" stroke-width="1.1"/></svg>
<div class="txt" style="top:782.31px;font-size:14.1px;line-height:20px;color:#363636;left:467.80px;">Data Access</div>
<div class="pill" style="left:799.00px;top:780.55px;width:29.6px;height:22.5px;border:1px solid #d9d9d9;border-radius:12px;color:#6a6a6a">All</div>
<div class="pill" style="left:833.20px;top:780.55px;width:87.6px;height:22.5px;background:#c6d9f9;border-radius:12px;color:#3a3a3a">Business Unit</div>
<div class="pill" style="left:925.40px;top:780.55px;width:58px;height:22.5px;background:#c6d9f9;border-radius:12px;color:#3a3a3a">Created</div>
<div class="abs" style="left:1395px;top:780.55px;width:26px;height:22.5px;border-radius:12px;border:1px solid #d9d9d9"></div>
<svg class="abs" style="left:1402.50px;top:786.30px;" width="11" height="11" viewBox="0 0 11 11"><path d="M0.8,3.6 L3.6,6 L8.6,0.8 M0.8,7 L3.6,9.6 L10.2,3.4" fill="none" stroke="#444" stroke-width="1.1"/></svg>
<div class="txt" style="top:817.87px;font-size:14.8px;line-height:21px;color:#363636;left:467.80px;">Data Reporting</div>
<div class="pill" style="left:799.00px;top:816.05px;width:29.6px;height:22.5px;border:1px solid #d9d9d9;border-radius:12px;color:#6a6a6a">All</div>
<div class="pill" style="left:833.20px;top:816.05px;width:87.6px;height:22.5px;border:1px solid #d9d9d9;border-radius:12px;color:#6a6a6a">Business Unit</div>
<div class="pill" style="left:925.40px;top:816.05px;width:58px;height:22.5px;background:#c6d9f9;border-radius:12px;color:#3a3a3a">Created</div>
<div class="abs" style="left:1395px;top:816.05px;width:26px;height:22.5px;border-radius:12px;border:1px solid #d9d9d9"></div>
<svg class="abs" style="left:1402.50px;top:821.80px;" width="11" height="11" viewBox="0 0 11 11"><path d="M0.8,3.6 L3.6,6 L8.6,0.8 M0.8,7 L3.6,9.6 L10.2,3.4" fill="none" stroke="#444" stroke-width="1.1"/></svg>
<svg class="abs" style="left:449.00px;top:857.30px;" width="12" height="12" viewBox="0 0 12 12"><rect x="0.00" y="0.00" width="1.2" height="1.2" fill="#888"/><rect x="0.00" y="2.85" width="1.2" height="1.2" fill="#888"/><rect x="0.00" y="5.70" width="1.2" height="1.2" fill="#888"/><rect x="0.00" y="8.55" width="1.2" height="1.2" fill="#888"/><rect x="0.00" y="11.40" width="1.2" height="1.2" fill="#888"/><rect x="2.85" y="0.00" width="1.2" height="1.2" fill="#888"/><rect x="2.85" y="5.70" width="1.2" height="1.2" fill="#888"/><rect x="2.85" y="11.40" width="1.2" height="1.2" fill="#888"/><rect x="5.70" y="0.00" width="1.2" height="1.2" fill="#888"/><rect x="5.70" y="2.85" width="1.2" height="1.2" fill="#888"/><rect x="5.70" y="5.70" width="1.2" height="1.2" fill="#888"/><rect x="5.70" y="8.55" width="1.2" height="1.2" fill="#888"/><rect x="5.70" y="11.40" width="1.2" height="1.2" fill="#888"/><rect x="8.55" y="0.00" width="1.2" height="1.2" fill="#888"/><rect x="8.55" y="5.70" width="1.2" height="1.2" fill="#888"/><rect x="8.55" y="11.40" width="1.2" height="1.2" fill="#888"/><rect x="11.40" y="0.00" width="1.2" height="1.2" fill="#888"/><rect x="11.40" y="2.85" width="1.2" height="1.2" fill="#888"/><rect x="11.40" y="5.70" width="1.2" height="1.2" fill="#888"/><rect x="11.40" y="8.55" width="1.2" height="1.2" fill="#888"/><rect x="11.40" y="11.40" width="1.2" height="1.2" fill="#888"/></svg>
<div class="txt" style="top:854.08px;font-size:14.5px;line-height:20px;color:#363636;left:467.80px;">Section - Section 1 Name</div>
<div class="pill" style="left:799.00px;top:852.05px;width:42px;height:22.5px;background:#c6d9f9;border-radius:12px;color:#3a3a3a">View</div>
<div class="pill" style="left:845.60px;top:852.05px;width:36.5px;height:22.5px;border:1px solid #d9d9d9;border-radius:12px;color:#6a6a6a">Edit</div>
<div class="abs" style="left:1395px;top:852.05px;width:26px;height:22.5px;border-radius:12px;border:1px solid #d9d9d9"></div>
<svg class="abs" style="left:1402.50px;top:857.80px;" width="11" height="11" viewBox="0 0 11 11"><path d="M0.8,3.6 L3.6,6 L8.6,0.8 M0.8,7 L3.6,9.6 L10.2,3.4" fill="none" stroke="#444" stroke-width="1.1"/></svg>
<svg class="abs" style="left:449.00px;top:893.30px;" width="12" height="12" viewBox="0 0 12 12"><rect x="0.00" y="0.00" width="1.2" height="1.2" fill="#888"/><rect x="0.00" y="2.85" width="1.2" height="1.2" fill="#888"/><rect x="0.00" y="5.70" width="1.2" height="1.2" fill="#888"/><rect x="0.00" y="8.55" width="1.2" height="1.2" fill="#888"/><rect x="0.00" y="11.40" width="1.2" height="1.2" fill="#888"/><rect x="2.85" y="0.00" width="1.2" height="1.2" fill="#888"/><rect x="2.85" y="5.70" width="1.2" height="1.2" fill="#888"/><rect x="2.85" y="11.40" width="1.2" height="1.2" fill="#888"/><rect x="5.70" y="0.00" width="1.2" height="1.2" fill="#888"/><rect x="5.70" y="2.85" width="1.2" height="1.2" fill="#888"/><rect x="5.70" y="5.70" width="1.2" height="1.2" fill="#888"/><rect x="5.70" y="8.55" width="1.2" height="1.2" fill="#888"/><rect x="5.70" y="11.40" width="1.2" height="1.2" fill="#888"/><rect x="8.55" y="0.00" width="1.2" height="1.2" fill="#888"/><rect x="8.55" y="5.70" width="1.2" height="1.2" fill="#888"/><rect x="8.55" y="11.40" width="1.2" height="1.2" fill="#888"/><rect x="11.40" y="0.00" width="1.2" height="1.2" fill="#888"/><rect x="11.40" y="2.85" width="1.2" height="1.2" fill="#888"/><rect x="11.40" y="5.70" width="1.2" height="1.2" fill="#888"/><rect x="11.40" y="8.55" width="1.2" height="1.2" fill="#888"/><rect x="11.40" y="11.40" width="1.2" height="1.2" fill="#888"/></svg>
<div class="txt" style="top:889.18px;font-size:14.5px;line-height:20px;color:#363636;left:467.80px;">Section - Section 2 Name</div>
<div class="pill" style="left:799.00px;top:888.05px;width:42px;height:22.5px;background:#c6d9f9;border-radius:12px;color:#3a3a3a">View</div>
<div class="pill" style="left:845.60px;top:888.05px;width:36.5px;height:22.5px;background:#c6d9f9;border-radius:12px;color:#3a3a3a">Edit</div>
<div class="abs" style="left:1395px;top:888.05px;width:26px;height:22.5px;border-radius:12px;background:#c6d9f9"></div>
<svg class="abs" style="left:1402.50px;top:893.80px;" width="11" height="11" viewBox="0 0 11 11"><path d="M0.8,3.6 L3.6,6 L8.6,0.8 M0.8,7 L3.6,9.6 L10.2,3.4" fill="none" stroke="#444" stroke-width="1.1"/></svg>
</div>
</body></html>
